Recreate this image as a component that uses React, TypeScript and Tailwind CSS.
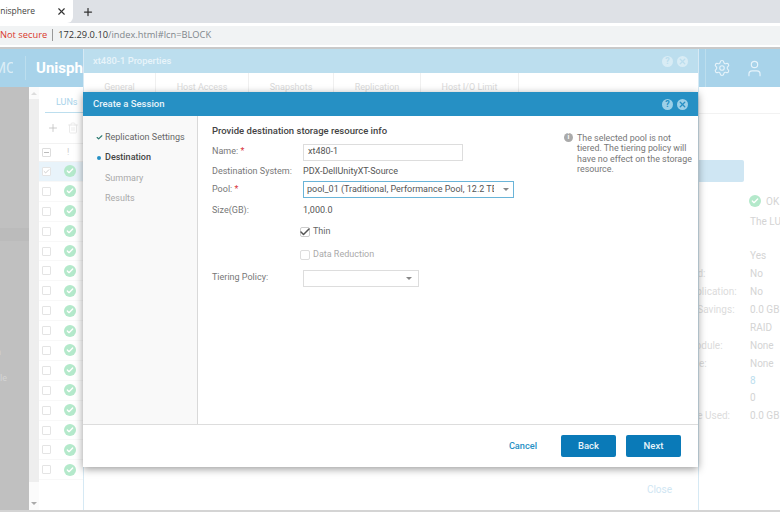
import { Check, Plus, Settings, Trash2, User, X } from "lucide-react";

const rowCount = 16;

const details = [
  { label: "", value: "Yes", h: "h-[18px]" },
  { label: "Thin Cloned:", value: "No", h: "h-[18px]" },
  { label: "Data Deduplication:", value: "No", h: "h-[18px]" },
  { label: "Reduction Savings:", value: "0.0 GB", h: "h-[18px]" },
  { label: "", value: "RAID", h: "h-[18px]" },
  { label: "Storage Module:", value: "None", h: "h-[18px]" },
  { label: "Tiering Type:", value: "None", h: "h-[18px]" },
  { label: "", value: "8", h: "h-[17px]" },
  { label: "", value: "0", h: "h-[17px]" },
  { label: "Snap Space Used:", value: "0.0 GB", h: "h-[19px]" },
];

function StatusDot({ size = "w-[12px] h-[12px]" }: { size?: string }) {
  return (
    <span className={`flex items-center justify-center rounded-full bg-[#b4e9cb] ${size}`}>
      <Check className="w-[8px] h-[8px] text-white" strokeWidth={4} />
    </span>
  );
}

function TitleIcons({ tone }: { tone: string }) {
  return (
    <div className="flex items-center gap-[4px]">
      <span className={`flex w-[11px] h-[11px] items-center justify-center rounded-full text-[9px] font-bold leading-none ${tone}`}>
        ?
      </span>
      <span className={`flex w-[11px] h-[11px] items-center justify-center rounded-full ${tone}`}>
        <X className="w-[9px] h-[9px]" strokeWidth={3.5} />
      </span>
    </div>
  );
}

function FormRow({ label, required, className, children }: { label?: string; required?: boolean; className: string; children?: React.ReactNode }) {
  return (
    <div className={`flex items-center ${className}`}>
      <div className="w-[91px] shrink-0 text-[#777]">
        {label}
        {required && <span className="text-[#d9363e]"> *</span>}
      </div>
      {children}
    </div>
  );
}

function CreateSessionDialog() {
  return (
    <div className="absolute left-[83px] top-[92px] z-20 flex h-[375px] w-[615px] flex-col bg-white shadow-[0_2px_8px_rgba(0,0,0,0.4)]">
      <div className="flex h-[24px] shrink-0 items-center justify-between bg-[#2690c4] pl-[10px] pr-[10px]">
        <span className="text-[9.5px] font-medium text-[#e8f4fa]">Create a Session</span>
        <TitleIcons tone="bg-[#9cd0e8] text-[#2690c4]" />
      </div>
      <div className="flex min-h-0 flex-1 border-b border-[#ddd]">
        <nav className="w-[115px] shrink-0 border-r border-[#d9d9d9] bg-[#f9f9f9] pt-[11px] text-[9px]">
          <div className="flex h-[20.5px] items-center whitespace-nowrap text-[#666]">
            <Check className="ml-[13px] mr-[2px] h-[7px] w-[7px] text-[#2c7a70]" strokeWidth={4} />
            Replication Settings
          </div>
          <div className="flex h-[20.5px] items-center font-medium text-[#444]">
            <span className="ml-[14px] mr-[4px] h-[4px] w-[4px] rounded-full bg-[#2690c4]" />
            Destination
          </div>
          <div className="flex h-[20.5px] items-center pl-[22px] text-[#aaa]">Summary</div>
          <div className="flex h-[20.5px] items-center pl-[22px] text-[#aaa]">Results</div>
        </nav>
        <div className="min-w-0 flex-1 pl-[14px] pt-[7px] text-[9px]">
          <div className="flex">
            <div className="w-[349px] shrink-0">
              <div className="flex h-[16px] items-center text-[9.5px] font-medium text-[#444]">
                Provide destination storage resource info
              </div>
              <FormRow label="Name:" required className="mt-[4px] h-[18px]">
                <div className="flex h-[17px] w-[160px] items-center border border-[#ddd] pl-[4px] text-[#555]">xt480-1</div>
              </FormRow>
              <FormRow label="Destination System:" className="mt-[2px] h-[18px]">
                <span className="text-[#555]">PDX-DellUnityXT-Source</span>
              </FormRow>
              <FormRow label="Pool:" required className="h-[17px]">
                <div className="flex h-[17px] w-[211px] items-center border border-[#6ab4d8] pl-[3px] pr-[4px] text-[#555]">
                  <span className="w-[187px] overflow-hidden whitespace-nowrap">pool_01 (Traditional, Performance Pool, 12.2 TB)</span>
                  <span className="ml-auto h-0 w-0 border-x-[3px] border-t-[3px] border-x-transparent border-t-[#888]" />
                </div>
              </FormRow>
              <FormRow label="Size(GB):" className="mt-[4px] h-[18px]">
                <span className="text-[#555]">1,000.0</span>
              </FormRow>
              <FormRow className="mt-[3px] h-[18px]">
                <span className="-ml-[3px] mr-[3px] flex h-[10px] w-[10px] items-center justify-center rounded-[2px] border border-[#ccc]">
                  <Check className="h-[12px] w-[12px] shrink-0 text-[#555]" strokeWidth={3} />
                </span>
                <span className="text-[#666]">Thin</span>
              </FormRow>
              <FormRow className="mt-[5px] h-[18px]">
                <span className="-ml-[3px] mr-[3px] h-[10px] w-[10px] rounded-[2px] border border-[#ddd]" />
                <span className="text-[#aaa]">Data Reduction</span>
              </FormRow>
              <FormRow label="Tiering Policy:" className="mt-[5px] h-[18px]">
                <div className="flex h-[17px] w-[116px] items-center justify-end border border-[#ddd] pr-[6px]">
                  <span className="h-0 w-0 border-x-[3px] border-t-[3px] border-x-transparent border-t-[#888]" />
                </div>
              </FormRow>
            </div>
            <div className="flex pl-[3px] pt-[10px]">
              <span className="mr-[4px] flex h-[9px] w-[9px] shrink-0 items-center justify-center rounded-full bg-[#aaa] text-[7px] font-bold leading-none text-white">
                i
              </span>
              <p className="w-[117px] text-[8.9px] leading-[10.3px] text-[#777]">
                The selected pool is not tiered. The tiering policy will have no effect on the storage resource.
              </p>
            </div>
          </div>
        </div>
      </div>
      <div className="flex h-[42px] shrink-0 items-center justify-end gap-[10px] pr-[17px]">
        <button className="mr-[14px] text-[9.2px] font-medium text-[#2690c4]">Cancel</button>
        <button className="h-[22px] w-[55px] rounded-[2px] bg-[#0a7ab8] text-[9.5px] font-medium text-[#e8f4fa]">Back</button>
        <button className="h-[22px] w-[55px] rounded-[2px] bg-[#0a7ab8] text-[9.5px] font-medium text-[#e8f4fa]">Next</button>
      </div>
    </div>
  );
}

function PropertiesDialog() {
  const tabs = [
    { name: "General", w: "w-[72px]" },
    { name: "Host Access", w: "w-[93px]" },
    { name: "Snapshots", w: "w-[85px]" },
    { name: "Replication", w: "w-[87px]" },
    { name: "Host I/O Limit", w: "w-[98px]" },
  ];
  return (
    <div className="absolute left-[83px] top-[49px] z-10 flex h-[461px] w-[616px] flex-col border-x border-[#d6e9f4] bg-white">
      <div className="flex h-[24px] shrink-0 items-center justify-between bg-[#bcdeee] pl-[9px] pr-[10px]">
        <span className="text-[9.4px] font-medium text-[#e8f4fa]">xt480-1 Properties</span>
        <TitleIcons tone="bg-[#d8ecf5] text-[#bcdeee]" />
      </div>
      <div className="flex h-[20px] shrink-0">
        {tabs.map((t) => (
          <div key={t.name} className={`${t.w} flex justify-center border-r border-[#f0f0f0] pt-[8px] text-[9px] text-[#dadada]`}>
            {t.name}
          </div>
        ))}
      </div>
      <div className="mt-auto flex h-[42px] items-center justify-end pr-[26px] text-[10px] text-[#cfe6f3]">Close</div>
    </div>
  );
}

export default function App() {
  return (
    <div className="relative flex h-[512px] w-[780px] flex-col overflow-hidden bg-white [font-family:Roboto,sans-serif]">
      {/* browser chrome */}
      <div className="flex h-[23px] shrink-0 items-center bg-[#dee1e6] [font-family:'Open_Sans',sans-serif]">
        <div className="flex h-[23px] w-[73px] items-center overflow-hidden rounded-br-[6px] bg-white text-[#444]">
          <span className="-ml-[6px] text-[8.5px]">Unisphere</span>
          <X className="ml-auto mr-[6px] h-[11px] w-[11px] text-[#333]" strokeWidth={2.5} />
        </div>
        <Plus className="ml-[9px] h-[12px] w-[12px] text-[#333]" strokeWidth={2.5} />
      </div>
      <div className="flex h-[26px] shrink-0 items-center border-b-2 border-b-[#c9c9c9] bg-white">
        <div className="flex h-[19px] w-full items-center bg-[#f1f3f4] text-[9.3px] [font-family:'Open_Sans',sans-serif]">
          <span className="text-[#d9372c]">Not secure</span>
          <span className="mx-[5px] h-[12px] w-px bg-[#999]" />
          <span className="text-[#333]">172.29.0.10</span>
          <span className="text-[#80868b]">/index.html#lcn=BLOCK</span>
        </div>
      </div>

      {/* app header */}
      <header className="flex h-[38px] shrink-0 items-center bg-[#a8d3ea] text-white">
        <span className="w-[13px] overflow-hidden text-[15px] text-[#dcedf6]">
          <span className="-ml-[7px] block">MC</span>
        </span>
        <span className="ml-[12px] h-[24px] w-px bg-[#bcdeee]" />
        <span className="ml-[10px] text-[15px] font-bold">Unisphere</span>
        <span className="ml-auto h-[38px] w-px bg-[#bcdeee]" />
        <Settings className="ml-[7px] h-[18px] w-[18px] text-[#e6f3fa]" strokeWidth={1.5} />
        <User className="ml-[14px] mr-[16px] h-[19px] w-[19px] text-[#e6f3fa]" strokeWidth={1.5} />
      </header>

      <main className="flex min-h-0 flex-1">
        {/* dimmed left sidebar */}
        <aside className="relative w-[29px] shrink-0 bg-[#c0c0c0] pt-[141px] text-[9px] text-[#d4d4d4]">
          <div className="h-[13px] bg-[#bbbbbb]" />
          <div className="-ml-[4px] mt-[105px] overflow-hidden">n</div>
          <div className="mt-[12px]">le</div>
        </aside>

        {/* LUN table */}
        <section className="flex w-[54px] shrink-0">
          <div className="flex w-[10px] shrink-0 flex-col bg-[#fbfbfb]">
            <div className="flex h-[12px] items-center justify-center">
              <span className="h-0 w-0 border-x-[3px] border-b-[3px] border-x-transparent border-b-[#ddd]" />
            </div>
            <div className="h-[383px] bg-[#eeeeee]" />
            <div className="mt-auto flex h-[14px] items-center justify-center">
              <span className="h-0 w-0 border-x-[3px] border-t-[3px] border-x-transparent border-t-[#aaa]" />
            </div>
          </div>
          <div className="min-w-0 flex-1">
            <div className="h-[25px] pl-[17px] pt-[9px] text-[9px] text-[#a8d3ea]">LUNs</div>
            <div className="ml-[6px] h-px bg-[#bcdeee]" />
            <div className="flex h-[30px] items-center pl-[8px]">
              <Plus className="h-[12px] w-[12px] text-[#bbb]" strokeWidth={1.5} />
              <Trash2 className="ml-[8px] h-[12px] w-[12px] text-[#e4e4e4]" strokeWidth={1.5} />
            </div>
            <div className="flex h-[19px] items-center border-y border-[#f2f2f2]">
              <span className="ml-[3px] flex h-[9px] w-[9px] items-center justify-center rounded-[1px] border border-[#ddd]">
                <span className="h-px w-[5px] bg-[#bbb]" />
              </span>
              <span className="ml-[16px] text-[9px] text-[#ccc]">!</span>
            </div>
            {Array.from({ length: rowCount }, (_, i) => (
              <div key={i} className={`flex h-[19.9px] items-center border-b border-[#f8f8f8] ${i === 0 ? "bg-[#e8f3fa]" : ""}`}>
                <span className="ml-[3px] flex h-[9px] w-[9px] items-center justify-center rounded-[1px] border border-[#e4e4e4] bg-white">
                  {i === 0 && <Check className="h-[9px] w-[9px] text-[#bbb]" strokeWidth={2.5} />}
                </span>
                <span className="ml-[13px]">
                  <StatusDot />
                </span>
              </div>
            ))}
          </div>
        </section>

        <div className="min-w-0 flex-1" />

        {/* details pane, mostly behind the dialogs */}
        <section className="w-[130px] shrink-0 overflow-hidden text-[10px] text-[#d4d4d4]">
          <div className="h-[27px] border-b border-[#f2f2f2]" />
          <div className="mt-[46px] h-[22px] w-[94px] rounded-r-[2px] bg-[#cfe6f3]" />
          <div className="mt-[12px] flex h-[14px] items-center pl-[99px]">
            <StatusDot />
            <span className="ml-[5px]">OK</span>
          </div>
          <div className="mt-[6px] h-[14px] whitespace-nowrap pl-[100px]">The LUN</div>
          <div className="mt-[18px]">
            {details.map((d) => (
              <div key={d.value + d.label} className={`flex items-center ${d.h}`}>
                <span className="w-[100px] shrink-0 overflow-hidden whitespace-nowrap text-[#dcdcdc]">{d.label}</span>
                <span className={`whitespace-nowrap ${d.value === "8" ? "text-[#bcdeee]" : ""}`}>{d.value}</span>
              </div>
            ))}
          </div>
        </section>
      </main>
      <div className="h-[2px] shrink-0 bg-[#d4d4d4]" />

      <PropertiesDialog />
      <CreateSessionDialog />
    </div>
  );
}
